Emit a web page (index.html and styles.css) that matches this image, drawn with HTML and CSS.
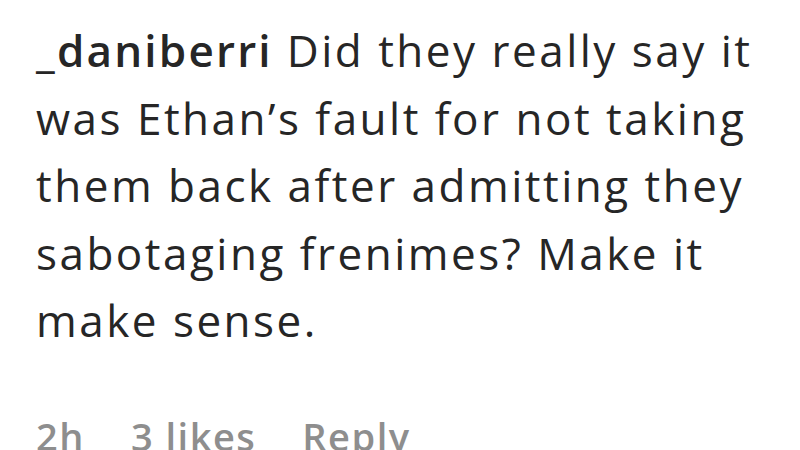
FILE: index.html
```html
<!DOCTYPE html>
<html>
<head>
<meta charset="utf-8">
<link rel="stylesheet" href="styles.css">
</head>
<body>
<div class="comment">
  <p class="text"><span class="username">_daniberri</span> Did they really say it was Ethan’s fault for not taking them back after admitting they sabotaging frenimes? Make it make sense.</p>
  <div class="meta">
    <span>2h</span>
    <span>3 likes</span>
    <span>Reply</span>
  </div>
</div>
</body>
</html>
```
FILE: styles.css
```css
html, body {
  margin: 0;
  padding: 0;
  background: #ffffff;
  overflow: hidden;
}
.comment {
  width: 728px;
  padding: 17px 0 0 36px;
  font-family: "Open Sans", "Noto Sans", sans-serif;
  color: #262626;
}
.text {
  margin: 0;
  font-size: 44px;
  line-height: 67.5px;
  letter-spacing: 2.5px;
}
.username {
  font-weight: 600;
  letter-spacing: 2.2px;
}
.meta {
  display: flex;
  gap: 46px;
  margin-top: 61px;
  font-size: 38px;
  line-height: 40px;
  letter-spacing: 1.5px;
  color: #8e8e8e;
  font-weight: 600;
}
```
